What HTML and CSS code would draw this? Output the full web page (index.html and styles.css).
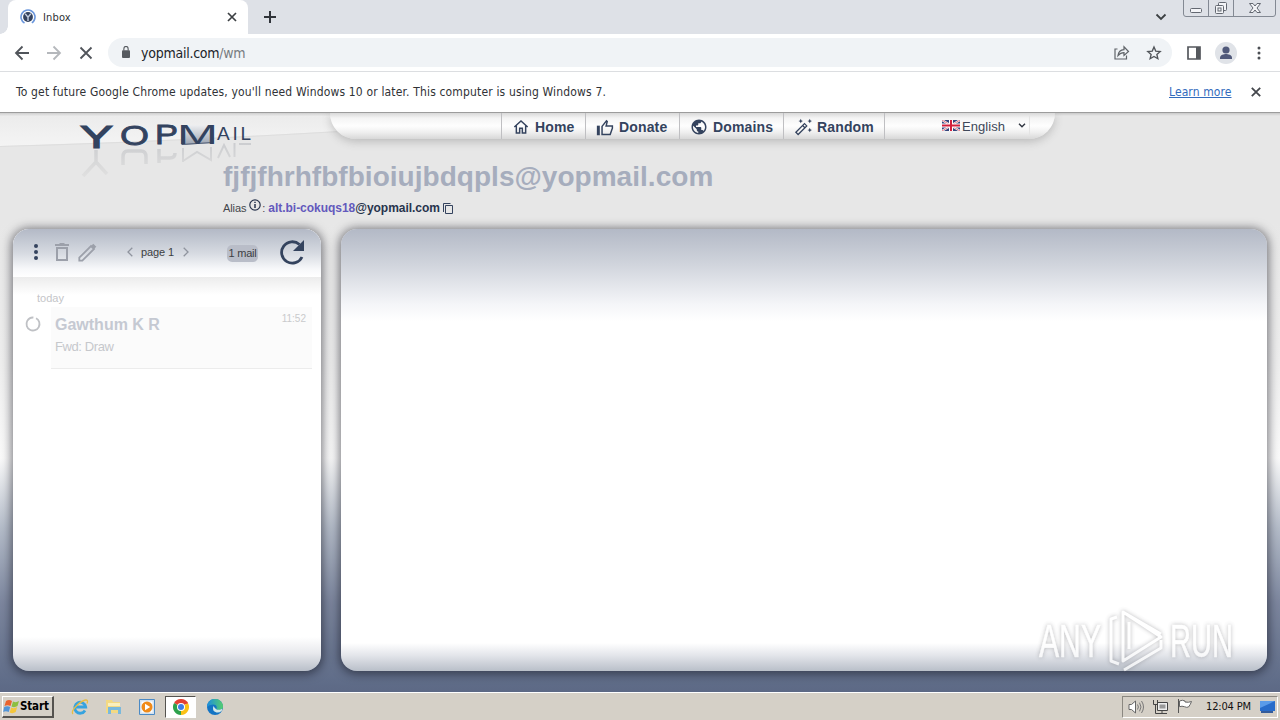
FILE: index.html
```html
<!DOCTYPE html>
<html lang="en">
<head>
<meta charset="utf-8">
<title>Inbox</title>
<link rel="stylesheet" href="styles.css">
</head>
<body>
<header class="tabstrip">
  <span class="edge"></span>
  <div class="tab">
    <svg class="favicon" width="16" height="16" viewBox="0 0 16 16"><circle cx="8" cy="8" r="7" fill="none" stroke="#6a96dc" stroke-width="1.600" stroke-dasharray="36 8" transform="rotate(120 8 8)"/><circle cx="8" cy="8" r="4.900" fill="#34425e"/><path d="M5.200 4.800 8 8.200l2.800-3.400M8 8v4" fill="none" stroke="#c3cde0" stroke-width="1.400"/></svg>
    <span class="tab-title">Inbox</span>
    <svg class="tab-close" width="10" height="10" viewBox="0 0 10 10"><path d="M1 1l8 8M9 1 1 9" stroke="#3c4043" stroke-width="1.700"/></svg>
  </div>
  <svg class="newtab" width="14" height="14" viewBox="0 0 14 14"><path d="M7 1v12M1 7h12" stroke="#30343a" stroke-width="2"/></svg>
  <svg class="chev" width="12" height="8" viewBox="0 0 12 8"><path d="M1.500 1.500 6 6l4.500-4.500" fill="none" stroke="#3c4043" stroke-width="1.800"/></svg>
  <svg class="winbtns" width="94" height="18" viewBox="0 0 94 18"><path d="M.5 0v14q0 2.500 2.500 2.500h87q2.500 0 2.500-2.500V0M25.500 0v16M50.500 0v16" fill="none" stroke="#838993"/><g fill="#f3f4f7" stroke="#636871"><rect x="7.500" y="8.500" width="11" height="4" rx="1"/><rect x="35.500" y="2.500" width="8" height="8" rx="1"/><rect x="32.500" y="5.500" width="8" height="8" rx="1"/><rect x="35" y="8" width="3" height="3"/><path d="M66.500 3.500h3.500l2 2.500 2-2.500h3.500L74 8l3.500 4.500H74L72 10l-2 2.500h-3.500L70 8z"/></g></svg>
</header>
<div class="toolbar">
  <svg class="nav3" width="80" height="16" viewBox="0 0 80 16"><g fill="none" stroke-width="1.800"><path d="M15 8H2.500M8.500 1.500 2 8l6.500 6.500" stroke="#50545a"/><path d="M33 8h12.500M39.500 1.500 46 8l-6.500 6.500" stroke="#b5b8bc"/><path d="M66.500 2.500l11 11M77.500 2.500l-11 11" stroke="#50545a"/></g></svg>
  <div class="omnibox">
    <svg class="lock" width="8" height="12" viewBox="0 0 10 13" preserveAspectRatio="none"><rect y="4.500" width="10" height="8.500" rx="1.200" fill="#575b60"/><path d="M2.300 5V3.200a2.700 2.700 0 0 1 5.400 0V5" fill="none" stroke="#575b60" stroke-width="1.400"/></svg>
    <span class="url">yopmail.com<i>/wm</i></span>
    <svg class="share" width="16" height="15" viewBox="0 0 16 15"><path d="M3.500 4H1v10h11.500v-3.500M4 10.500c.5-4 3-5.700 6-5.800V1.800l4.500 4.700-4.500 4V7.600c-2.500 0-4.300.8-6 2.900z" fill="none" stroke="#5f6368" stroke-width="1.200"/></svg>
    <svg class="star" width="16" height="16" viewBox="0 0 24 24"><path d="M12 3l2.600 6.100 6.700.6-5 4.400 1.500 6.500L12 17.200l-5.800 3.400 1.500-6.500-5-4.400 6.700-.6z" fill="none" stroke="#505459" stroke-width="2"/></svg>
  </div>
  <svg class="side" width="14" height="14" viewBox="0 0 14 14"><path d="M1 1h12v12H1z" fill="none" stroke="#55585d" stroke-width="1.700"/><path d="M9 1h4v12H9z" fill="#55585d"/></svg>
  <svg class="avatar" width="22" height="22" viewBox="0 0 22 22"><circle cx="11" cy="11" r="11" fill="#e0e3e8"/><circle cx="11" cy="8" r="3.600" fill="#50597a"/><path d="M5 17v-1.500C5 13 9 12 11 12s6 1 6 3.500V17z" fill="#50597a"/></svg>
  <svg class="dots" width="4" height="14" viewBox="0 0 4 14"><g fill="#4b4f54"><circle cx="2" cy="2" r="1.500"/><circle cx="2" cy="7" r="1.500"/><circle cx="2" cy="12" r="1.500"/></g></svg>
</div>
<div class="infobar">
  <span class="info-text">To get future Google Chrome updates, you'll need Windows 10 or later. This computer is using Windows 7.</span>
  <a class="learn">Learn more</a>
  <svg width="10" height="10" viewBox="0 0 10 10"><path d="M.8.8l8.400 8.400M9.200.8.800 9.200" stroke="#44474c" stroke-width="1.800"/></svg>
</div>
<main class="page">
  <svg class="swoosh" width="340" height="40" viewBox="0 0 340 40"><defs><linearGradient id="sw" x1="0" y1="0" x2="0" y2="1"><stop offset="0" stop-color="#cfcfcf"/><stop offset=".1" stop-color="#ececec"/><stop offset="1" stop-color="#f4f4f4"/></linearGradient></defs><path d="M0 0h340v18Q150 29 0 33z" fill="url(#sw)"/><path d="M0 33.500Q150 29.500 340 18.500" fill="none" stroke="#dedede"/></svg>
  <div class="top">
    <svg class="logo" width="174" height="66" viewBox="0 0 174 66">
      <defs>
        <linearGradient id="env" x1="0" y1="0" x2="0" y2="1"><stop offset="0" stop-color="#eeeff1"/><stop offset="1" stop-color="#99a2b0"/></linearGradient>
        <linearGradient id="fade" gradientUnits="userSpaceOnUse" x1="0" y1="32" x2="0" y2="64"><stop offset="0" stop-color="#808590" stop-opacity=".26"/><stop offset="1" stop-color="#909090" stop-opacity=".08"/></linearGradient>
      </defs>
      <g fill="#33435f" stroke="#33435f" stroke-width=".5">
        <text x="1" y="35" font-size="31" stroke-width="1.200" textLength="33" lengthAdjust="spacingAndGlyphs">Y</text>
        <text x="41" y="32" font-size="28" stroke-width=".8" textLength="29" lengthAdjust="spacingAndGlyphs">O</text>
        <text x="76" y="31" font-size="27" stroke-width=".8" textLength="23" lengthAdjust="spacingAndGlyphs">P</text>
        <path d="M102 12h33v18l-33 2z" fill="url(#env)" stroke="none"/>
        <text x="98" y="31" font-size="27" stroke="none" textLength="41" lengthAdjust="spacingAndGlyphs">M</text>
        <path d="M103 31.500l31-2" stroke-width=".8"/>
        <text x="138" y="26.500" font-size="19" stroke="none" textLength="34" lengthAdjust="spacing">AIL</text>
      </g>
      <g fill="none" stroke="url(#fade)" stroke-width="3.500"><path d="M17 37v12M17 49 4 63M17 49l11 12M44 52v-8q0-6 5-6h13q5 0 5 6v7M80 50V36M80 45h11q5 0 5-5"/><path d="M104 49V35M104 48l14-9 14 8V34M139 45l6-13 6 12M155.500 30v14M160 31h12" stroke-width="2"/></g>
    </svg>
    <nav class="menu">
      <a class="m1"><svg width="16" height="16" viewBox="0 0 24 24"><path d="M2 12 12 3l10 9M5 10v11h5v-7h4v7h5V10" fill="none" stroke="#34435e" stroke-width="2.200"/></svg><span>Home</span></a>
      <a class="m2"><svg width="18" height="17" viewBox="0 0 24 23"><path d="M1 9h4v13H1z" fill="#34435e"/><path d="M8 10l6-7.500 1 1-1.500 6H22v3L19 21H8z" fill="none" stroke="#34435e" stroke-width="2"/></svg><span>Donate</span></a>
      <a class="m3"><svg width="18" height="18" viewBox="0 0 24 24"><path fill="#34435e" d="M12 2C6.480 2 2 6.480 2 12s4.480 10 10 10 10-4.480 10-10S17.520 2 12 2zm-1 17.930c-3.950-.49-7-3.850-7-7.930 0-.62.080-1.210.210-1.790L9 15v1c0 1.100.9 2 2 2v1.930zm6.900-2.540c-.26-.81-1-1.390-1.900-1.390h-1v-3c0-.55-.45-1-1-1H8v-2h2c.55 0 1-.45 1-1V7h2c1.100 0 2-.9 2-2v-.41c2.930 1.190 5 4.060 5 7.410 0 2.080-.8 3.970-2.100 5.390z"/></svg><span>Domains</span></a>
      <a class="m4"><svg width="18" height="18" viewBox="0 0 24 24"><path d="M2.500 19 14 7.500l3 3L5.500 22zM11.500 10l3 3" fill="none" stroke="#34435e" stroke-width="1.700"/><path fill="#34435e" d="M21 1l1 2.200 2 .8-2 .9L21 7l-1-2.100-2-.9 2-.8zM9 1l1 2.200 2 .8-2 .9L9 7 8 4.900 6 4l2-.8zM21 13l1 2.200 2 .8-2 .9-1 2.100-1-2.100-2-.9 2-.8z"/></svg><span>Random</span></a>
      <div class="lang"><svg width="18" height="11" viewBox="0 0 18 11"><path fill="#34457c" d="M0 0h18v11H0z"/><path d="M0 0l18 11M18 0 0 11" stroke="#fff" stroke-width="2"/><path d="M0 0l18 11M18 0 0 11" stroke="#d53c50" stroke-width=".7"/><path d="M9 0v11M0 5.500h18" stroke="#fff" stroke-width="4"/><path d="M9 0v11M0 5.500h18" stroke="#d21f3c" stroke-width="2"/></svg><span>English</span><svg class="caret" width="8" height="5" viewBox="0 0 8 5"><path d="M1 .8l3 3 3-3" fill="none" stroke="#303540" stroke-width="1.400"/></svg></div>
    </nav>
  </div>
  <section class="address">
    <h1>fjfjfhrhfbfbioiujbdqpls@yopmail.com</h1>
    <p><span class="al">Alias</span><svg class="inf" width="12" height="12" viewBox="0 0 12 12"><circle cx="6" cy="6" r="5.200" fill="none" stroke="#27344d" stroke-width="1.200"/><path d="M6 5v4M6 2.700v1.300" stroke="#27344d" stroke-width="1.500"/></svg><span class="colon">:</span><b><em>alt.bi-cokuqs18</em>@yopmail.com</b><svg class="copy" width="12" height="13" viewBox="0 0 12 13"><path d="M1.500 10V1.500h7M3.500 3.500h7v8h-7z" fill="none" stroke="#34435e"/></svg></p>
  </section>
  <div class="panes">
    <aside class="inbox">
      <div class="bar">
        <svg class="menu-dots" width="6" height="16" viewBox="0 0 6 16"><g fill="#34435e"><circle cx="3" cy="2" r="2"/><circle cx="3" cy="8" r="2"/><circle cx="3" cy="14" r="2"/></g></svg>
        <svg class="trash" width="14" height="18" viewBox="0 0 14 18"><path d="M2 5h10v12H2zM0 2h14M4.500 1h5" fill="none" stroke="#9ca0aa" stroke-width="2"/></svg>
        <svg class="pencil" width="19" height="19" viewBox="0 0 19 19"><path d="M1.300 17.700v-3L13 3l3 3L4.300 17.700z" fill="none" stroke="#9ca0aa" stroke-width="1.800"/><path d="M13 3l2.300-2.300 3 3L16 6z" fill="#9ca0aa"/></svg>
        <svg class="lt" width="6" height="10" viewBox="0 0 6 10"><path d="M5.300.8 1 5l4.300 4.200" fill="none" stroke="#8f949e" stroke-width="1.300"/></svg>
        <span class="pg">page 1</span>
        <svg class="gt" width="6" height="10" viewBox="0 0 6 10"><path d="M.7.8 5 5 .7 9.200" fill="none" stroke="#8f949e" stroke-width="1.300"/></svg>
        <span class="count">1 mail</span>
        <svg class="refresh" width="26" height="26" viewBox="0 0 26 26"><path d="M23 18A10.700 10.700 0 1 1 20.500 5.500" fill="none" stroke="#34435e" stroke-width="2.800"/><path d="M25 1v11H14z" fill="#34435e"/></svg>
      </div>
      <div class="list">
        <div class="day">today</div>
        <div class="row">
          <svg width="16" height="16" viewBox="0 0 16 16"><circle cx="8" cy="8" r="6.500" fill="none" stroke="#bfc1c5" stroke-width="1.800" stroke-dasharray="37 4" transform="rotate(-62 8 8)"/></svg>
          <div class="mail"><div class="who"><b>Gawthum K R</b><span>11:52</span></div><div class="subject">Fwd: Draw</div></div>
        </div>
      </div>
    </aside>
    <section class="reader"></section>
  </div>
  <svg class="watermark" width="242" height="76" viewBox="0 0 242 76">
    <g fill="#fff" stroke="#fff" stroke-width=".6">
      <text x="3" y="50" font-size="47" textLength="62" lengthAdjust="spacingAndGlyphs">ANY</text>
      <text x="134" y="50" font-size="47" textLength="63" lengthAdjust="spacingAndGlyphs">RUN</text>
    </g>
    <path d="M81 10l-6 2v42l8 3M87 5v49l38-24zM93 15v27M88 63l37-22V33M87 5l38 22" fill="none" stroke="#fff" stroke-width="3" stroke-linejoin="round"/>
  </svg>
</main>
<footer class="taskbar">
  <div class="start"><svg width="17" height="15" viewBox="0 0 17 15"><path d="M3 2q3-2 6 0L7.500 7q-3-1.500-6 0z" fill="#e9632e"/><path d="M10 2.500q3 1.500 6-.5l-1.500 5q-3 2-6 .5z" fill="#8cbf3f"/><path d="M1.200 8q3-1.500 6 0l-1.500 5q-3-1.500-5.500 0z" fill="#5295d8"/><path d="M8.200 8.500q3 1.500 6-.5l-1.500 5q-3 2-6 .5z" fill="#f4c63c"/></svg><b>Start</b></div>
  <svg class="ie" width="18" height="18" viewBox="0 0 18 18"><path d="M14 12.500a5.500 5.500 0 1 1 .7-3.500H5" fill="none" stroke="#36a3df" stroke-width="2.800"/><path d="M2 16C-1 13 9 3 14.500 2q3-.3 1.500 3.500" fill="none" stroke="#e8bd43" stroke-width="1.300"/></svg>
  <svg class="folder" width="17" height="17" viewBox="0 0 17 17"><path d="M1 2h6l1 2h7v11H1z" fill="#f3d983"/><path d="M3 5h12v3H3z" fill="#fbf0bc"/><path d="M3 9h13v7h-3v-4H6v4H3z" fill="#7ab9dc"/></svg>
  <svg class="wmp" width="16" height="16" viewBox="0 0 16 16"><path d="M.5.5h15v15H.5z" fill="#d4e2ef" stroke="#4b8ac5"/><path d="M2.500 2.500h11v11h-11z" fill="#fff"/><circle cx="8" cy="8" r="5.500" fill="#f08a18"/><path d="M6 4.800 11.200 8 6 11.200z" fill="#fff"/></svg>
  <div class="active"><svg width="16" height="16" viewBox="0 0 16 16"><path d="M8 8 1.070 4A8 8 0 0 1 14.930 4z" fill="#e34133"/><path d="M8 8l6.930-4A8 8 0 0 1 8 16z" fill="#fbc116"/><path d="M8 8v8A8 8 0 0 1 1.070 4z" fill="#2da14c"/><path d="M8 4h6.930" stroke="#e34133"/><circle cx="8" cy="8" r="4" fill="#fff"/><circle cx="8" cy="8" r="3" fill="#3e7de7"/></svg></div>
  <svg class="edgeicon" width="16" height="16" viewBox="0 0 16 16"><defs><linearGradient id="eg"><stop offset="0" stop-color="#1c8ddf"/><stop offset="1" stop-color="#55ce6d"/></linearGradient></defs><circle cx="8" cy="8" r="8" fill="#1474c4"/><path d="M0 8a8 8 0 0 1 16-.5Q16 11 11.500 11 8.500 11 9.700 9 10 5.500 6 5.500 2 5.500 0 8" fill="url(#eg)"/><path d="M6.500 7q-2 5 3 6.500 3 .5 5-1.500Q16 10 14.500 10q-2 1.200-4.500.7Q7.500 9.500 6.500 7" fill="#d6e8e8"/></svg>
  <div class="tray">
    <svg class="sound" width="16" height="14" viewBox="0 0 16 14"><path d="M1 4.500h2.500L7.500 1v12L3.500 9.500H1z" fill="#fff" stroke="#666"/><path d="M9.500 4.500q1.800 2.500 0 5M11.500 2.700q3 4.300 0 8.600M13.500 1q4 6 0 12" fill="none" stroke="#777"/></svg>
    <svg class="net" width="17" height="16" viewBox="0 0 17 16"><path d="M5.500 3.500h10v8h-10z" fill="#eee" stroke="#444"/><path d="M7.500 5.500h6v4h-6z" fill="#999"/><path d="M10 12v2M6 14.500h9M1.500 1v4.500h4V1M3.500 5.500v9h4" fill="none" stroke="#444"/></svg>
    <svg class="flag" width="16" height="15" viewBox="0 0 16 15"><path d="M2.500 2q3-1.500 5.500 0v1q3.500.8 6.500-.5-1 3-3 5.500-2 .8-4-.3-2.500-1-5 0z" fill="#fff" stroke="#666"/><path d="M1.500 0v14" stroke="#555"/></svg>
    <span>12:04 PM</span>
    <svg class="desk" width="15" height="14" viewBox="0 0 15 14"><path d="M0 1h15v10H0z" fill="#286cca"/><path d="M0 1h15L0 8z" fill="#5a9be9"/><path d="M1 12h12" stroke="#345c9b" stroke-width="2"/></svg>
  </div>
</footer>
</body>
</html>
```
FILE: styles.css
```css
* { box-sizing: border-box; }
body { margin: 0; width: 1280px; height: 720px; overflow: hidden; display: flex; flex-direction: column; font-family: "DejaVu Sans Condensed", "DejaVu Sans", sans-serif; font-size: 12px; color: #303236; }
svg { display: block; flex: none; }
span, b, h1 { white-space: nowrap; }
.tabstrip { height: 34px; background: #dee1e7; display: flex; align-items: flex-start; flex: none; }
.edge { width: 8px; height: 34px; background: radial-gradient(circle at 0 26px, #dee1e7 7.500px, #fff 8px); clip-path: inset(26px 0 0 0); }
.tab { width: 240px; height: 34px; background: #fff; border-radius: 8px 8px 0 0; display: flex; align-items: center; padding: 0 11px 0 12px; }
.tab-title { margin-left: 7px; flex: 1; font-size: 11px; letter-spacing: .15px; }
.newtab { margin: 10px 0 0 15px; }
.chev { margin: 13px 0 0 878px; }
.winbtns { margin-left: 16px; }
.toolbar { height: 38px; background: #fff; border-bottom: 1px solid #dcdee1; display: flex; align-items: center; flex: none; }
.nav3 { margin-left: 14px; }
.omnibox { width: 1064px; height: 29px; margin-left: 14px; background: #f0f3f6; border-radius: 15px; display: flex; align-items: center; padding-left: 14px; }
.lock { margin-top: -2px; }
.url { margin-left: 11px; font-size: 14px; letter-spacing: -.25px; color: #202328; flex: 1; }
.url i { font-style: normal; color: #777b80; }
.share { margin-right: 16px; }
.star { margin-right: 10px; }
.side { margin-left: 15px; }
.avatar { margin-left: 14px; }
.dots { margin-left: 20px; }
.infobar { height: 41px; background: #fff; display: flex; align-items: center; padding: 0 19px 0 16px; flex: none; border-bottom: 1px solid #9c9c9c; }
.info-text { width: 1153px; font-size: 12px; letter-spacing: .16px; }
.learn { width: 82px; color: #326bbd; text-decoration: underline; white-space: nowrap; letter-spacing: .1px; }
.page { position: relative; height: 579px; flex: none; font-family: "Liberation Sans", Arial, sans-serif; background: linear-gradient(#c9c9c9 0, #e7e7e7 3px, #e7e7e7 110px, #eeeeee 250px, #fafafa 345px, #b4bcc9 415px, #7c869e 490px, #5f6c88 570px, #5d6985 579px); overflow: hidden; }
.swoosh { position: absolute; left: 0; top: 0; }
.top { position: relative; display: flex; height: 46px; align-items: flex-start; }
.logo { margin-left: 79px; width: 174px; }
.menu { margin-left: 77px; width: 725px; height: 26px; background: linear-gradient(#d8d8d8 0, #f4f4f4 5px, #fefefe 13px, #f0f0f0 19px, #d8d8d8 26px); border-radius: 0 0 26px 26px; box-shadow: 0 3px 9px rgba(80,80,80,.28); display: flex; padding-left: 171px; }
.menu a { display: flex; align-items: center; border-left: 1px solid #bfbfc2; font-weight: bold; font-size: 14px; color: #34435e; padding-top: 2px; letter-spacing: .15px; }
.m1 { width: 84px; padding-left: 11px; gap: 6px; }
.m2 { width: 94px; padding-left: 10px; gap: 5px; }
.m3 { width: 104px; padding-left: 10px; gap: 5px; }
.menu .m4 { width: 102px; padding-left: 10px; gap: 5px; border-right: 1px solid #bfbfc2; }
.lang { width: 92px; height: 21px; margin: 2px 0 0 53px; display: flex; align-items: center; font-size: 13px; color: #3f4859; padding-left: 4px; gap: 2px; border-right: 1px solid #e4e4e4; }
.lang span { letter-spacing: .05px; flex: 1; padding-top: 1px; }
.caret { margin-right: 3px; }
.address { position: relative; height: 70px; padding-left: 223px; }
h1 { margin: 0; padding-top: 1px; line-height: 34px; font-size: 28px; color: #a6adbd; letter-spacing: .03px; }
.address p { margin: 4px 0 0; display: flex; height: 20px; align-items: center; font-size: 11px; color: #44464b; letter-spacing: -.1px; }
.address b { font-size: 12px; color: #27344d; margin-left: 3px; letter-spacing: -.03px; }
.address em { font-style: normal; color: #6359bd; }
.inf { margin: -6px 1px 0 3px; }
.copy { margin-left: 2px; }
.panes { display: flex; gap: 20px; padding: 0 13px; position: relative; }
.inbox, .reader { height: 442px; border-radius: 16px; box-shadow: 0 1px 10px 2px rgba(10,10,20,.5); overflow: hidden; }
.inbox { width: 308px; background: linear-gradient(#fff 408px, #e8e9ed 424px, #b9bfc9 442px); }
.reader { width: 926px; background: linear-gradient(#b3b9c6 0, #d0d4dc 35px, #f4f5f8 75px, #fff 92px, #fff 414px, #e4e6eb 426px, #b9bfc9 442px); }
.bar { height: 48px; background: linear-gradient(#b3b9c6, #d6dae1 24px, #f7f8fa 40px, #fff 48px); display: flex; align-items: center; font-size: 11px; color: #3c3e42; padding: 0 0 2px 20px; }
.trash { margin-left: 16px; }
.pencil { margin-left: 9px; }
.lt { margin-left: 30px; }
.pg { margin-left: 8px; width: 34px; letter-spacing: -.1px; }
.gt { margin-left: 8px; }
.count { margin: 2px 0 0 38px; width: 31px; height: 17px; line-height: 17px; border-radius: 5px; background: #b9bdc8; text-align: center; letter-spacing: -.2px; }
.refresh { margin-left: 21px; }
.list { height: 110px; background: linear-gradient(#ececec, #fff 18px); padding: 13px 9px 0 12px; }
.day { height: 17px; line-height: 17px; padding-left: 12px; color: #c4c5c8; font-size: 11px; }
.row { display: flex; gap: 10px; }
.row > svg { margin-top: 9px; }
.mail { flex: 1; height: 62px; background: #fbfbfb; border-bottom: 1px solid #ececec; padding: 7px 6px 0 4px; }
.who { display: flex; justify-content: space-between; color: #c5c9d2; font-size: 16px; line-height: 22px; }
.who span { font-size: 10px; line-height: 10px; color: #c9cacc; }
.subject { font-size: 13px; color: #c6c8cc; line-height: 22px; letter-spacing: -.4px; }
.watermark { position: absolute; left: 1036px; top: 494px; opacity: .75; font-family: "Liberation Sans", sans-serif; filter: drop-shadow(0 0 2px rgba(70,70,75,.5)); }
.taskbar { height: 28px; flex: none; background: #d5d0c7; border-top: 1px solid #fff; display: flex; align-items: center; padding: 0 2px; }
.start { width: 52px; height: 22px; border: 1px solid #fff; border-right: 2px solid #55534f; border-bottom: 2px solid #55534f; display: flex; align-items: center; padding-left: 0; color: #000; }
.start b { font-size: 11.500px; letter-spacing: -.15px; }
.ie { margin-left: 17px; }
.folder { margin-left: 16px; }
.wmp { margin-left: 17px; }
.active { margin-left: 10px; width: 31px; height: 22px; border: 1px solid #55534f; border-right-color: #fff; border-bottom-color: #fff; background: #fff; display: flex; align-items: center; justify-content: center; }
.edgeicon { margin-left: 11px; }
.tray { margin-left: auto; width: 156px; height: 22px; border: 1px solid #8b8881; border-right-color: #fff; border-bottom-color: #fff; display: flex; align-items: center; padding-left: 5px; color: #111; font-size: 11px; }
.net { margin-left: 8px; }
.flag { margin-left: 8px; }
.tray span { margin-left: 13px; width: 46px; letter-spacing: -.15px; }
.desk { margin-left: 8px; }
```
